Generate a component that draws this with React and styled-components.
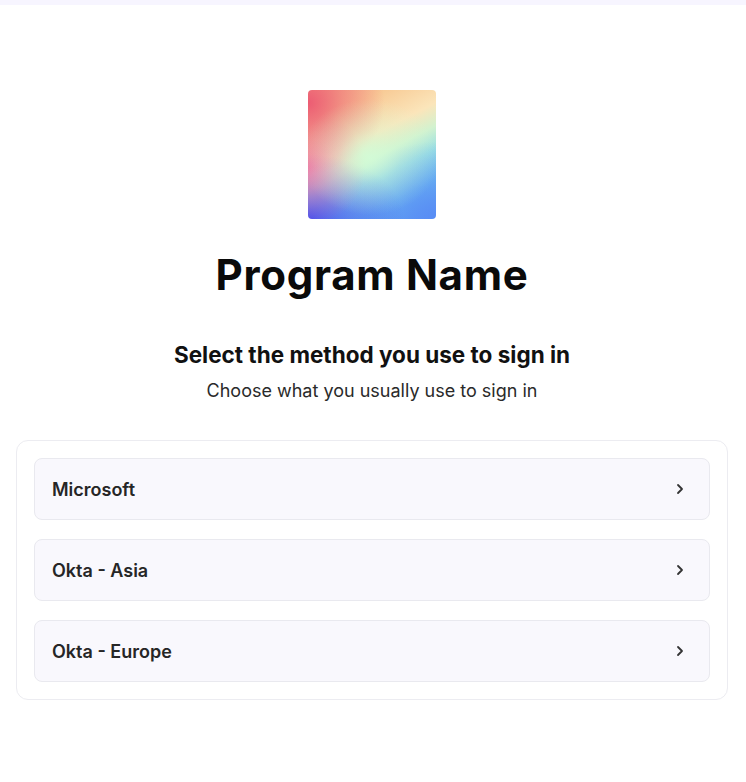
import React from "react";
import styled, { createGlobalStyle } from "styled-components";

const Global = createGlobalStyle`
  html, body { margin: 0; padding: 0; background: #ffffff; }
  body { font-family: Inter, "Noto Sans", sans-serif; color: #111; }
`;

const TopStrip = styled.div`
  height: 5px;
  background: #f7f5ff;
`;

const Main = styled.main`
  display: flex;
  flex-direction: column;
  align-items: center;
  padding: 85px 18px 40px 16px;
`;

const Logo = styled.div`
  width: 128px;
  height: 129px;
  border-radius: 4px;
  background:
    radial-gradient(ellipse 55% 45% at 48% 52%, rgba(210, 252, 215, 0.85) 0%, rgba(210, 252, 215, 0.35) 45%, rgba(210, 252, 215, 0) 100%),
    radial-gradient(ellipse 60% 55% at 0% 10%, rgba(236, 92, 115, 1) 0%, rgba(236, 92, 115, 0.5) 45%, rgba(236, 92, 115, 0) 100%),
    radial-gradient(ellipse 45% 45% at 0% 60%, rgba(240, 112, 165, 0.85) 0%, rgba(240, 112, 165, 0.35) 50%, rgba(240, 112, 165, 0) 100%),
    radial-gradient(ellipse 75% 50% at 0% 100%, rgba(70, 78, 238, 1) 0%, rgba(70, 78, 238, 0.45) 50%, rgba(70, 78, 238, 0) 100%),
    radial-gradient(ellipse 75% 60% at 100% 100%, rgba(88, 140, 245, 0.95) 0%, rgba(88, 140, 245, 0.4) 50%, rgba(88, 140, 245, 0) 100%),
    linear-gradient(153deg, #f5ae88 0%, #f8cb96 20%, #fbe5ba 40%, #d2f2cf 52%, #98dfe4 64%, #6cbaf0 80%, #5b95f2 100%);
`;

const Title = styled.h1`
  margin: 32px 0 0;
  font-family: Inter, "Noto Sans", sans-serif;
  font-size: 42px;
  line-height: 48px;
  font-weight: 700;
  letter-spacing: 0.7px;
  color: #0a0a0a;
`;

const Heading = styled.h2`
  margin: 42px 0 0;
  font-size: 22.5px;
  line-height: 28px;
  font-weight: 700;
  color: #111;
`;

const Sub = styled.p`
  margin: 10px 0 0;
  font-size: 18px;
  line-height: 24px;
  color: #2a2a2a;
`;

const Card = styled.div`
  align-self: stretch;
  margin-top: 37px;
  border: 1px solid #ececf1;
  border-radius: 12px;
  padding: 17px;
  display: flex;
  flex-direction: column;
  gap: 19px;
`;

const Option = styled.button`
  box-sizing: border-box;
  display: flex;
  align-items: center;
  justify-content: space-between;
  height: 62px;
  padding: 0 24px 0 17px;
  background: #f9f8fd;
  border: 1px solid #e9e9ef;
  border-radius: 8px;
  font-family: Inter, "Noto Sans", sans-serif;
  font-size: 18px;
  font-weight: 600;
  color: #262626;
  cursor: pointer;
  text-align: left;
`;

const Chevron = () => (
  <svg width="10" height="14" viewBox="0 0 10 14" fill="none">
    <path d="M3 3L7 7L3 11" stroke="#333" strokeWidth="1.8" strokeLinecap="round" strokeLinejoin="round" />
  </svg>
);

const options = ["Microsoft", "Okta - Asia", "Okta - Europe"];

export default function App() {
  return (
    <>
      <Global />
      <TopStrip />
      <Main>
        <Logo />
        <Title>Program Name</Title>
        <Heading>Select the method you use to sign in</Heading>
        <Sub>Choose what you usually use to sign in</Sub>
        <Card>
          {options.map((o) => (
            <Option key={o}>
              <span>{o}</span>
              <Chevron />
            </Option>
          ))}
        </Card>
      </Main>
    </>
  );
}
